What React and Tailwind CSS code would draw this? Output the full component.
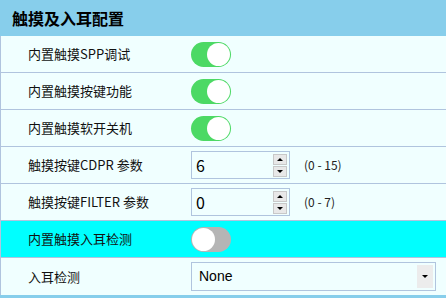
const FONT = { fontFamily: '"Microsoft YaHei", "Noto Sans CJK SC", "Noto Sans", sans-serif' }

function Toggle({ on }) {
  return (
    <div className={`relative w-[40px] h-[25px] rounded-full ${on ? 'bg-[#4cd964]' : 'bg-[#b5b5b5]'}`}>
      <div className={`absolute top-[1px] w-[23px] h-[23px] rounded-full bg-white ${on ? 'left-[16px]' : 'left-[1px]'}`} />
    </div>
  )
}

function Spin({ value, range }) {
  return (
    <div className="flex items-center">
      <div className="flex items-center w-[99px] h-[28px] border border-[#b0c4de] bg-[#f0ffff] pl-[4px] pr-[2px]">
        <span className="flex-1 text-[16px] text-black">{value}</span>
        <div className="flex flex-col gap-[1px]">
          <div className="w-[14px] h-[11px] bg-[#e8e8e8] border border-[#c8c8c8] flex items-center justify-center">
            <div className="w-0 h-0 border-l-[3px] border-r-[3px] border-b-[3px] border-l-transparent border-r-transparent border-b-black" />
          </div>
          <div className="w-[14px] h-[11px] bg-[#e8e8e8] border border-[#c8c8c8] flex items-center justify-center">
            <div className="w-0 h-0 border-l-[3px] border-r-[3px] border-t-[3px] border-l-transparent border-r-transparent border-t-black" />
          </div>
        </div>
      </div>
      <span className="ml-[14px] text-[12px] text-[#222]">{range}</span>
    </div>
  )
}

const rows = [
  { label: '内置触摸SPP调试', ctl: <Toggle on /> },
  { label: '内置触摸按键功能', ctl: <Toggle on /> },
  { label: '内置触摸软开关机', ctl: <Toggle on /> },
  { label: '触摸按键CDPR 参数', ctl: <Spin value="6" range="(0 - 15)" /> },
  { label: '触摸按键FILTER 参数', ctl: <Spin value="0" range="(0 - 7)" /> },
  { label: '内置触摸入耳检测', ctl: <Toggle />, hl: true },
  {
    label: '入耳检测',
    ctl: (
      <div className="flex items-center w-[245px] h-[29px] border border-[#b0c4de] bg-[#f0ffff] pl-[7px] pr-[2px]">
        <span className="flex-1 text-[14px] text-black" style={{ fontFamily: '"Liberation Sans", Arial, sans-serif' }}>None</span>
        <div className="w-[16px] h-[23px] bg-[#ececec] flex items-center justify-center">
          <div className="w-0 h-0 border-l-[3px] border-r-[3px] border-t-[3px] border-l-transparent border-r-transparent border-t-black" />
        </div>
      </div>
    ),
  },
]

export default function App() {
  return (
    <div className="w-[446px] h-[298px] bg-[#87ceeb] overflow-hidden" style={FONT}>
      <div className="h-[36px] flex items-center pl-[12px] text-[16px] font-bold text-black">触摸及入耳配置</div>
      <div className="border-l border-[#b0c4de]">
        {rows.map((r, i) => (
          <div
            key={i}
            className={`flex items-center h-[37px] ${i < rows.length - 1 ? 'border-b border-[#b0c4de]' : ''} ${r.hl ? 'bg-[#00ffff]' : 'bg-[#f0ffff]'}`}
          >
            <div className="w-[190px] pl-[27px] text-[13px] text-[#111]">{r.label}</div>
            <div>{r.ctl}</div>
          </div>
        ))}
      </div>
    </div>
  )
}
